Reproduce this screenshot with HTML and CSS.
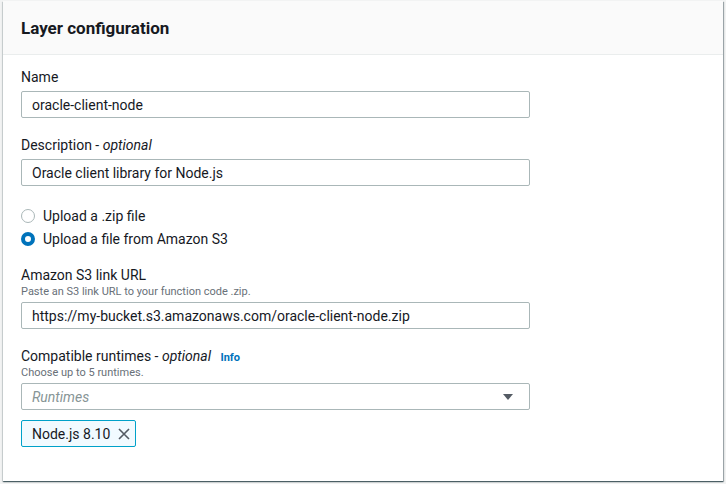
FILE: index.html
```html
<!DOCTYPE html>
<html>
<head>
<meta charset="utf-8">
<link rel="stylesheet" href="styles.css">
</head>
<body>
<div class="card">
  <div class="card-header"><h2 class="title">Layer configuration</h2></div>
  <div class="card-body">
    <div class="field">
      <div class="label">Name</div>
      <div class="input">oracle-client-node</div>
    </div>
    <div class="field">
      <div class="label">Description - <i>optional</i></div>
      <div class="input">Oracle client library for Node.js</div>
    </div>
    <div class="radios">
      <div class="radio"><span class="circle"></span>Upload a .zip file</div>
      <div class="radio"><span class="circle checked"></span>Upload a file from Amazon S3</div>
    </div>
    <div class="field">
      <div class="label">Amazon S3 link URL</div>
      <div class="desc">Paste an S3 link URL to your function code .zip.</div>
      <div class="input">https://my-bucket.s3.amazonaws.com/oracle-client-node.zip</div>
    </div>
    <div class="field">
      <div class="label">Compatible runtimes - <i>optional</i> <span class="info">Info</span></div>
      <div class="desc">Choose up to 5 runtimes.</div>
      <div class="input select"><span class="placeholder">Runtimes</span>
        <svg class="caret" width="12" height="8" viewBox="0 0 12 8"><path d="M1 1h10L6 7z" fill="#545b64"/></svg>
      </div>
      <div class="tokens">
        <span class="token">Node.js 8.10
          <svg class="x" width="12" height="12" viewBox="0 0 12 12"><path d="M1 1l10 10M11 1L1 11" stroke="#545b64" stroke-width="1.6" fill="none"/></svg>
        </span>
      </div>
    </div>
  </div>
</div>
</body>
</html>
```
FILE: styles.css
```css
* { box-sizing: border-box; }
html, body { margin: 0; padding: 0; }
body {
  background: #f2f3f3;
  font-family: Roboto, "Open Sans", sans-serif;
  font-size: 14px;
  color: #16191f;
  padding: 1px 3px 0 3px;
  width: 726px;
  height: 484px;
}
.card {
  background: #fff;
  width: 720px;
  height: 480px;
  box-shadow: 0 1px 1px 0 rgba(0,28,36,0.5), 1px 1px 1px 0 rgba(0,28,36,0.3), -1px 1px 1px 0 rgba(0,28,36,0.1);
  overflow: hidden;
}
.card-header {
  background: #fafafa;
  border-bottom: 1px solid #eaeded;
  height: 54px;
  padding: 1px 18px 0;
  display: flex;
  align-items: center;
}
.title {
  margin: 0;
  font-size: 17px;
  font-weight: 700;
  line-height: 20px;
}
.card-body {
  padding: 12px 18px;
}
.field { margin-bottom: 17px; width: 509px; }
.label { line-height: 20px; height: 20px; margin-bottom: 4px; }
.label i { font-style: italic; }
.desc { font-size: 11px; color: #687078; line-height: 13px; margin-top: -4px; margin-bottom: 4px; }
.input {
  height: 27px;
  border: 1px solid #aab7b8;
  border-radius: 2px;
  padding: 0 10px;
  display: flex;
  align-items: center;
  line-height: 20px;
}
.radios { padding-top: 1px; margin-bottom: 15px; }
.radio { display: flex; align-items: center; height: 23px; }
.circle {
  width: 14px; height: 14px;
  border: 1px solid #aab7b8;
  border-radius: 50%;
  margin-right: 8px;
  display: inline-block;
}
.circle.checked { border: 4px solid #0073bb; }
.info { color: #0073bb; font-weight: 700; font-size: 11px; margin-left: 6px; line-height: 1; }
.select { justify-content: space-between; }
.placeholder { color: #879596; font-style: italic; }
.caret { margin-right: 5px; }
.tokens { margin-top: 10px; }
.token {
  display: inline-flex;
  align-items: center;
  height: 27px;
  border: 1px solid #00a1c9;
  background: #f1faff;
  border-radius: 2px;
  padding: 0 5px 0 10px;
}
.token .x { margin-left: 8px; }
```
